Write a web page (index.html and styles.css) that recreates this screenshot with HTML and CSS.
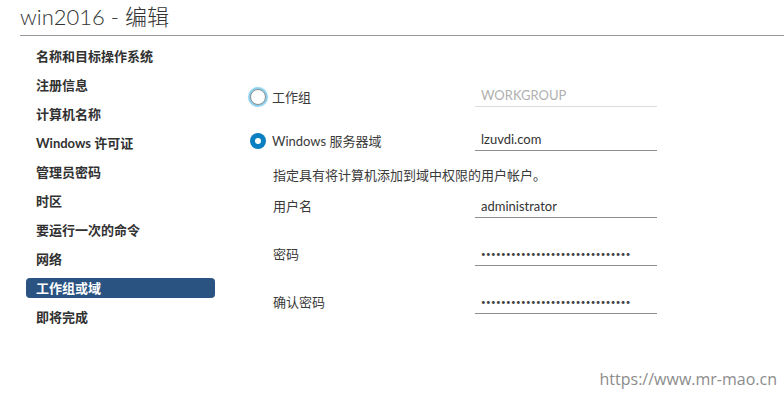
FILE: index.html
```html
<!DOCTYPE html>
<html lang="zh-CN">
<head>
<meta charset="utf-8">
<title>win2016 - 编辑</title>
<link rel="stylesheet" href="styles.css">
</head>
<body>
<div class="page">
  <header class="header">
    <h1 class="title">win2016 - 编辑</h1>
  </header>
  <div class="main">
    <nav class="nav">
      <div class="nav-item">名称和目标操作系统</div>
      <div class="nav-item">注册信息</div>
      <div class="nav-item">计算机名称</div>
      <div class="nav-item">Windows 许可证</div>
      <div class="nav-item">管理员密码</div>
      <div class="nav-item">时区</div>
      <div class="nav-item">要运行一次的命令</div>
      <div class="nav-item">网络</div>
      <div class="nav-item active">工作组或域</div>
      <div class="nav-item">即将完成</div>
    </nav>
    <section class="form">
      <div class="row row-radio row-first">
        <div class="label-cell">
          <span class="radio radio-focus"></span>
          <span class="label">工作组</span>
        </div>
        <div class="field field-disabled">WORKGROUP</div>
      </div>
      <div class="row row-radio row-second">
        <div class="label-cell">
          <span class="radio radio-checked"><span class="radio-dot"></span></span>
          <span class="label">Windows 服务器域</span>
        </div>
        <div class="field">lzuvdi.com</div>
      </div>
      <div class="hint">指定具有将计算机添加到域中权限的用户帐户。</div>
      <div class="row row-cred row-user">
        <div class="label-cell indent">
          <span class="label">用户名</span>
        </div>
        <div class="field">administrator</div>
      </div>
      <div class="row row-cred row-gap">
        <div class="label-cell indent">
          <span class="label">密码</span>
        </div>
        <div class="field"><span class="dots">••••••••••••••••••••••••••••••</span></div>
      </div>
      <div class="row row-cred row-gap">
        <div class="label-cell indent">
          <span class="label">确认密码</span>
        </div>
        <div class="field"><span class="dots">••••••••••••••••••••••••••••••</span></div>
      </div>
    </section>
  </div>
  <div class="watermark">https://www.mr-mao.cn</div>
</div>
</body>
</html>
```
FILE: styles.css
```css
html, body {
  margin: 0;
  padding: 0;
  background: #ffffff;
}

body {
  font-family: Lato, "Noto Sans CJK SC", sans-serif;
  color: #313131;
}

.page {
  position: relative;
  width: 784px;
  height: 394px;
  overflow: hidden;
}

.header {
  margin-left: 20px;
  height: 35px;
  border-bottom: 1px solid #9a9a9a;
}

.title {
  margin: 0;
  padding-top: 3px;
  font-size: 22px;
  line-height: 28px;
  font-weight: 300;
  color: #333333;
}

.main {
  display: flex;
}

.nav {
  width: 189px;
  margin-left: 26px;
  padding-top: 10px;
  display: flex;
  flex-direction: column;
  gap: 9px;
}

.nav-item {
  height: 20px;
  line-height: 20px;
  padding-left: 10px;
  font-size: 13px;
  font-weight: 700;
  color: #313131;
  border-radius: 4px;
}

.nav-item.active {
  background: #2b5381;
  color: #ffffff;
}

.form {
  margin-left: 34px;
  display: flex;
  flex-direction: column;
}

.row {
  display: flex;
  align-items: flex-end;
}

.row-first {
  margin-top: 47px;
}

.row-second {
  margin-top: 20px;
}

.label-cell {
  width: 226px;
  display: flex;
  align-items: center;
  gap: 6px;
  height: 20px;
}

.row-cred .label-cell {
  margin-bottom: 2px;
}

.indent {
  padding-left: 24px;
  box-sizing: border-box;
}

.label {
  font-size: 13px;
  line-height: 20px;
  color: #3a3a3a;
}

.radio {
  width: 16px;
  height: 16px;
  box-sizing: border-box;
  border-radius: 50%;
  display: flex;
  align-items: center;
  justify-content: center;
  flex: none;
  margin-left: 1px;
}

.radio-focus {
  border: 1px solid #8c8c8c;
  background: #ffffff;
  box-shadow: 0 0 1px 2px #8ad0ee;
}

.radio-checked {
  background: #0a7fc2;
}

.radio-dot {
  width: 6px;
  height: 6px;
  border-radius: 50%;
  background: #ffffff;
}

.field {
  width: 182px;
  height: 24px;
  box-sizing: border-box;
  border-bottom: 1px solid #8c8c8c;
  padding-left: 6px;
  padding-top: 2px;
  font-size: 13px;
  line-height: 21px;
  color: #333333;
}

.field-disabled {
  color: #b0b0b0;
  border-bottom-color: #dcdcdc;
}

.dots {
  font-size: 8px;
  letter-spacing: 0.35px;
  color: #444444;
  vertical-align: top;
}

.hint {
  margin-top: 14px;
  padding-left: 24px;
  font-size: 13px;
  line-height: 20px;
  color: #3a3a3a;
}

.row-user {
  margin-top: 9px;
}

.row-gap {
  margin-top: 24px;
}

.watermark {
  position: absolute;
  right: 7px;
  top: 369px;
  font-family: "Open Sans", "Noto Sans", sans-serif;
  font-size: 16px;
  line-height: 20px;
  color: #8c8c8c;
}
```
